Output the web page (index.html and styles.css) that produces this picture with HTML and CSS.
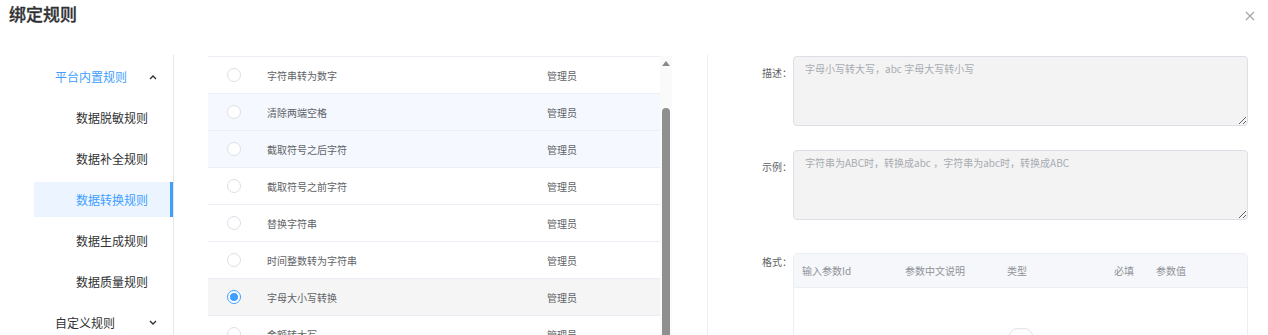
FILE: index.html
```html
<!DOCTYPE html>
<html lang="zh">
<head>
<meta charset="utf-8">
<link rel="stylesheet" href="styles.css">
</head>
<body>
<div class="dialog">
  <div class="header">
    <span class="title">绑定规则</span>
    <svg class="close" width="10" height="10" viewBox="0 0 10 10"><path d="M1 1L9 9M9 1L1 9" stroke="#a0a3a8" stroke-width="1.1"/></svg>
  </div>
  <div class="content">
    <div class="menu">
      <div class="menu-title active-title">
        <span>平台内置规则</span>
        <svg class="chev" width="8" height="6" viewBox="0 0 8 6"><path d="M1 5L4 2L7 5" fill="none" stroke="#303133" stroke-width="1.4"/></svg>
      </div>
      <div class="menu-item">数据脱敏规则</div>
      <div class="menu-item">数据补全规则</div>
      <div class="menu-item active">数据转换规则</div>
      <div class="menu-item">数据生成规则</div>
      <div class="menu-item">数据质量规则</div>
      <div class="menu-title">
        <span>自定义规则</span>
        <svg class="chev" width="8" height="6" viewBox="0 0 8 6"><path d="M1 1L4 4L7 1" fill="none" stroke="#303133" stroke-width="1.4"/></svg>
      </div>
    </div>
    <div class="list-wrap">
      <div class="list">
        <div class="row"><span class="radio"></span><span class="name">字符串转为数字</span><span class="owner">管理员</span></div>
        <div class="row hover"><span class="radio"></span><span class="name">清除两端空格</span><span class="owner">管理员</span></div>
        <div class="row hover"><span class="radio"></span><span class="name">截取符号之后字符</span><span class="owner">管理员</span></div>
        <div class="row"><span class="radio"></span><span class="name">截取符号之前字符</span><span class="owner">管理员</span></div>
        <div class="row"><span class="radio"></span><span class="name">替换字符串</span><span class="owner">管理员</span></div>
        <div class="row"><span class="radio"></span><span class="name">时间整数转为字符串</span><span class="owner">管理员</span></div>
        <div class="row selected"><span class="radio checked"></span><span class="name">字母大小写转换</span><span class="owner">管理员</span></div>
        <div class="row"><span class="radio"></span><span class="name">金额转大写</span><span class="owner">管理员</span></div>
      </div>
      <div class="scrollbar">
        <svg class="arrow" width="8" height="5" viewBox="0 0 8 5"><path d="M0 5L4 0L8 5Z" fill="#8a8a8a"/></svg>
        <div class="thumb"></div>
      </div>
    </div>
    <div class="divider"></div>
    <div class="form">
      <div class="form-item">
        <label class="label">描述：</label>
        <textarea class="field" readonly>字母小写转大写，abc 字母大写转小写</textarea>
      </div>
      <div class="form-item">
        <label class="label">示例：</label>
        <textarea class="field" readonly>字符串为ABC时，转换成abc ，字符串为abc时，转换成ABC</textarea>
      </div>
      <div class="form-item format">
        <label class="label">格式：</label>
        <div class="ptable">
          <div class="phead">
            <span class="c1">输入参数Id</span>
            <span class="c2">参数中文说明</span>
            <span class="c3">类型</span>
            <span class="c4">必填</span>
            <span class="c5">参数值</span>
          </div>
          <div class="pbody">
            <svg class="empty" width="30" height="10" viewBox="0 0 30 10"><path d="M0.5 10L7 2Q8 0.8 10 0.8H20Q22 0.8 23 2L29.5 10" fill="none" stroke="#dcdfe6" stroke-width="1"/></svg>
          </div>
        </div>
      </div>
    </div>
  </div>
</div>
</body>
</html>
```
FILE: styles.css
```css
* { box-sizing: border-box; }
html, body { margin: 0; padding: 0; background: #fff; }
body {
  font-family: "Noto Sans CJK SC", "Noto Sans", sans-serif;
  color: #606266;
  width: 1268px;
  height: 335px;
  overflow: hidden;
}
.dialog { width: 1268px; }
.header {
  height: 55px;
  display: flex;
  align-items: flex-start;
  justify-content: space-between;
  padding: 2px 13px 0 9px;
}
.title {
  font-size: 17px;
  font-weight: 500;
  color: #303133;
  line-height: 24px;
  -webkit-text-stroke: 0.3px #303133;
}
.close { margin-top: 9px; }
.content {
  display: flex;
  align-items: flex-start;
  height: 280px;
}
.menu {
  width: 174px;
  height: 280px;
  border-right: 1px solid #e6e6e6;
  padding-top: 1px;
  flex: none;
  display: flex;
  flex-direction: column;
}
.menu-title {
  height: 41px;
  flex: none;
  display: flex;
  align-items: center;
  justify-content: space-between;
  padding: 0 16px 0 55px;
  font-size: 12px;
  color: #303133;
}
.menu-title.active-title { color: #409eff; }
.menu-item {
  height: 35px;
  flex: none;
  margin: 3px 0 3px 34px;
  display: flex;
  align-items: center;
  padding-left: 42px;
  font-size: 12px;
  color: #303133;
}
.menu-item.active {
  background: #ecf5ff;
  color: #409eff;
  border-right: 3px solid #409eff;
}
.list-wrap {
  margin-left: 34px;
  margin-top: 1px;
  display: flex;
  width: 464px;
  height: 280px;
  flex: none;
}
.list {
  width: 452px;
  border-top: 1px solid #ebeef5;
}
.row {
  height: 37px;
  border-bottom: 1px solid #ebeef5;
  display: flex;
  align-items: center;
  font-size: 10px;
  color: #606266;
}
.row.hover { background: #f5f9ff; }
.row.selected { background: #f5f5f5; }
.radio {
  width: 14px;
  height: 14px;
  border: 1px solid #dcdfe6;
  border-radius: 50%;
  background: #fff;
  margin-left: 19px;
  flex: none;
  display: flex;
  align-items: center;
  justify-content: center;
}
.radio.checked { border-color: #409eff; }
.radio.checked::after {
  content: "";
  width: 8px;
  height: 8px;
  border-radius: 50%;
  background: #409eff;
}
.name { margin-left: 26px; width: 280px; }
.scrollbar {
  width: 12px;
  background: #fafafa;
  display: flex;
  flex-direction: column;
  align-items: center;
  padding-top: 5px;
}
.thumb {
  margin-top: 42px;
  width: 8px;
  flex: 1;
  background: #8f8f8f;
  border-radius: 4px 4px 0 0;
}
.divider {
  width: 1px;
  height: 280px;
  background: #ebeef5;
  margin-left: 35px;
  flex: none;
}
.form {
  flex: none;
  width: 540px;
  padding-top: 1px;
}
.form-item {
  display: flex;
  align-items: flex-start;
  margin-bottom: 24px;
}
.form-item.format { margin-top: 33px; }
.label {
  width: 85px;
  text-align: right;
  padding-right: 1px;
  font-size: 10px;
  color: #606266;
  line-height: 14px;
  padding-top: 10px;
}
.form-item.format .label { padding-top: 2px; }
.field {
  width: 455px;
  height: 70px;
  background: #f3f3f3;
  border: 1px solid #dcdfe6;
  border-radius: 4px;
  padding: 5px 11px;
  font-family: "Noto Sans CJK SC", "Noto Sans", sans-serif;
  font-size: 10px;
  line-height: 14px;
  color: #a8abb2;
  resize: vertical;
  outline: none;
  margin: 0;
}
.ptable {
  width: 455px;
  border: 1px solid #ebeef5;
  border-radius: 4px;
  height: 120px;
}
.phead {
  height: 34px;
  background: #f5f7fa;
  border-bottom: 1px solid #ebeef5;
  display: flex;
  align-items: center;
  font-size: 10px;
  color: #909399;
}
.c1 { margin-left: 8px; width: 103px; }
.c2 { width: 102px; }
.c3 { width: 107px; }
.c4 { width: 42px; }
.pbody {
  display: flex;
  justify-content: center;
  padding-top: 40px;
}
.empty { margin-left: 1px; }
```
